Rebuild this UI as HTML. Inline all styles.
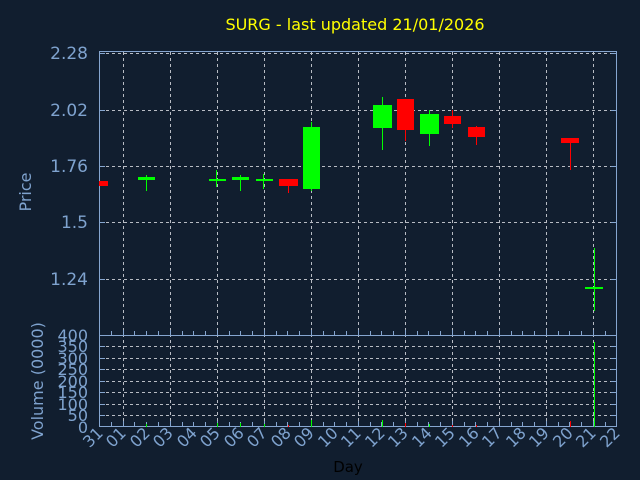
<!DOCTYPE html>
<html><head><style>
html,body{margin:0;padding:0;background:#111e2f;}
svg{display:block;font-family:"DejaVu Sans","Liberation Sans",sans-serif;}
</style></head><body>
<svg width="640" height="480" viewBox="0 0 640 480" xmlns="http://www.w3.org/2000/svg">
<rect width="640" height="480" fill="#111e2f"/>
<text x="355" y="30" fill="#ffff00" font-size="16" text-anchor="middle">SURG - last updated 21/01/2026</text>
<g stroke="#b8bcc4" stroke-dasharray="3,3" stroke-width="1">
<path d="M123.5 52V427M170.5 52V427M217.5 52V427M264.5 52V427M311.5 52V427M358.5 52V427M405.5 52V427M452.5 52V427M499.5 52V427M546.5 52V427M593.5 52V427"/>
<path d="M100 53.5H617M100 110.5H617M100 166.5H617M100 222.5H617M100 279.5H617"/>
<path d="M100 346.5H617M100 358.5H617M100 369.5H617M100 381.5H617M100 392.5H617M100 404.5H617M100 415.5H617"/>
</g>
<g stroke="#86a6d0" stroke-width="1" fill="none">
<rect x="99.5" y="51.5" width="517" height="375"/>
<path d="M99 335.5H617"/>
<path d="M99 53.5h6M99 110.5h6M99 166.5h6M99 222.5h6M99 279.5h6M611 53.5h6M611 110.5h6M611 166.5h6M611 222.5h6M611 279.5h6"/>
<path d="M99 346.5h6M99 358.5h6M99 369.5h6M99 381.5h6M99 392.5h6M99 404.5h6M99 415.5h6M611 346.5h6M611 358.5h6M611 369.5h6M611 381.5h6M611 392.5h6M611 404.5h6M611 415.5h6"/>
<path d="M111.5 426v-4M123.5 426v-5M134.5 426v-4M146.5 426v-4M158.5 426v-4M170.5 426v-5M182.5 426v-4M193.5 426v-4M205.5 426v-4M217.5 426v-5M229.5 426v-4M240.5 426v-4M252.5 426v-4M264.5 426v-5M276.5 426v-4M287.5 426v-4M299.5 426v-4M311.5 426v-5M323.5 426v-4M334.5 426v-4M346.5 426v-4M358.5 426v-5M370.5 426v-4M381.5 426v-4M393.5 426v-4M405.5 426v-5M417.5 426v-4M428.5 426v-4M440.5 426v-4M452.5 426v-5M464.5 426v-4M475.5 426v-4M487.5 426v-4M499.5 426v-5M511.5 426v-4M522.5 426v-4M534.5 426v-4M546.5 426v-5M558.5 426v-4M569.5 426v-4M581.5 426v-4M593.5 426v-5M605.5 426v-4"/>
<path d="M111.5 335v-4M123.5 335v-5M134.5 335v-4M146.5 335v-4M158.5 335v-4M170.5 335v-5M182.5 335v-4M193.5 335v-4M205.5 335v-4M217.5 335v-5M229.5 335v-4M240.5 335v-4M252.5 335v-4M264.5 335v-5M276.5 335v-4M287.5 335v-4M299.5 335v-4M311.5 335v-5M323.5 335v-4M334.5 335v-4M346.5 335v-4M358.5 335v-5M370.5 335v-4M381.5 335v-4M393.5 335v-4M405.5 335v-5M417.5 335v-4M428.5 335v-4M440.5 335v-4M452.5 335v-5M464.5 335v-4M475.5 335v-4M487.5 335v-4M499.5 335v-5M511.5 335v-4M522.5 335v-4M534.5 335v-4M546.5 335v-5M558.5 335v-4M569.5 335v-4M581.5 335v-4M593.5 335v-5M605.5 335v-4"/>
</g>
<g fill="#7fa3cf" font-size="17" text-anchor="end">
<text x="88" y="59">2.28</text><text x="88" y="116">2.02</text><text x="88" y="172">1.76</text><text x="88" y="228">1.5</text><text x="88" y="285">1.24</text>
</g>
<g fill="#7fa3cf" font-size="16" text-anchor="end">
<text x="88" y="341">400</text><text x="88" y="352">350</text><text x="88" y="364">300</text><text x="88" y="375">250</text><text x="88" y="387">200</text><text x="88" y="398">150</text><text x="88" y="410">100</text><text x="88" y="421">50</text><text x="88" y="433">0</text>
</g>
<text transform="translate(31,192) rotate(-90)" fill="#7fa3cf" font-size="16" text-anchor="middle">Price</text>
<text transform="translate(43,381) rotate(-90)" fill="#7fa3cf" font-size="16" text-anchor="middle">Volume (0000)</text>
<text x="348" y="472" fill="#000" font-size="15" text-anchor="middle">Day</text>
<g fill="#7fa3cf" font-size="16" text-anchor="end">
<text transform="translate(104,434) rotate(-45)">31</text>
<text transform="translate(127,434) rotate(-45)">01</text>
<text transform="translate(151,434) rotate(-45)">02</text>
<text transform="translate(174,434) rotate(-45)">03</text>
<text transform="translate(198,434) rotate(-45)">04</text>
<text transform="translate(221,434) rotate(-45)">05</text>
<text transform="translate(245,434) rotate(-45)">06</text>
<text transform="translate(268,434) rotate(-45)">07</text>
<text transform="translate(292,434) rotate(-45)">08</text>
<text transform="translate(315,434) rotate(-45)">09</text>
<text transform="translate(339,434) rotate(-45)">10</text>
<text transform="translate(362,434) rotate(-45)">11</text>
<text transform="translate(386,434) rotate(-45)">12</text>
<text transform="translate(409,434) rotate(-45)">13</text>
<text transform="translate(433,434) rotate(-45)">14</text>
<text transform="translate(456,434) rotate(-45)">15</text>
<text transform="translate(480,434) rotate(-45)">16</text>
<text transform="translate(503,434) rotate(-45)">17</text>
<text transform="translate(527,434) rotate(-45)">18</text>
<text transform="translate(550,434) rotate(-45)">19</text>
<text transform="translate(574,434) rotate(-45)">20</text>
<text transform="translate(597,434) rotate(-45)">21</text>
<text transform="translate(621,434) rotate(-45)">22</text>
</g>
<g fill="#00ff00" stroke="none">
<rect x="146" y="175" width="1" height="16"/><rect x="138" y="177" width="17" height="3"/>
<rect x="216" y="170" width="1" height="17"/><rect x="209" y="179" width="17" height="2"/>
<rect x="240" y="175" width="1" height="16"/><rect x="232" y="177" width="17" height="3"/>
<rect x="263" y="174" width="1" height="15"/><rect x="256" y="179" width="17" height="2"/>
<rect x="311" y="122" width="1" height="69"/><rect x="303" y="127" width="17" height="62"/>
<rect x="382" y="97" width="1" height="53"/><rect x="373" y="105" width="19" height="23"/>
<rect x="429" y="110" width="1" height="36"/><rect x="420" y="114" width="19" height="20"/>
<rect x="594" y="248" width="1" height="63"/><rect x="585" y="287" width="18" height="2"/>
<rect x="594" y="342" width="1" height="85"/>
<rect x="382" y="420" width="1" height="7"/><rect x="311" y="420" width="1" height="7"/>
<rect x="146" y="424" width="1" height="3"/><rect x="217" y="423" width="1" height="4"/><rect x="240" y="423" width="1" height="4"/><rect x="264" y="424" width="1" height="3"/><rect x="429" y="424" width="1" height="3"/>
</g>
<g fill="#ff0000" stroke="none">
<rect x="99" y="181" width="9" height="5"/>
<rect x="288" y="185" width="1" height="8"/><rect x="279" y="179" width="19" height="7"/>
<rect x="405" y="130" width="1" height="11"/><rect x="397" y="99" width="17" height="31"/>
<rect x="452" y="110" width="1" height="18"/><rect x="444" y="116" width="17" height="8"/>
<rect x="476" y="126" width="1" height="19"/><rect x="468" y="127" width="17" height="10"/>
<rect x="570" y="142" width="1" height="28"/><rect x="561" y="138" width="18" height="5"/>
<rect x="405" y="423" width="1" height="4"/><rect x="570" y="421" width="1" height="6"/><rect x="288" y="425" width="1" height="2"/><rect x="452" y="425" width="1" height="2"/><rect x="476" y="425" width="1" height="2"/>
</g>
</svg>
</body></html>
